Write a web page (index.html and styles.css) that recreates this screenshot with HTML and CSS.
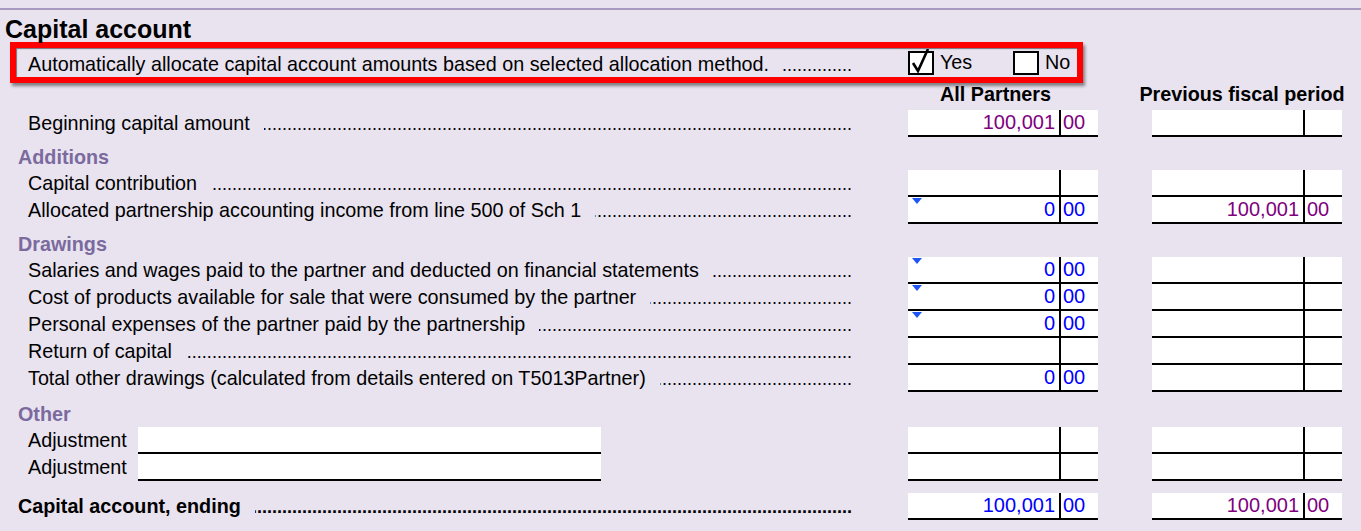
FILE: index.html
```html
<!DOCTYPE html>
<html lang="en">
<head>
    <meta charset="UTF-8">
    <meta name="viewport" content="width=device-width, initial-scale=1.0">
    <title>Capital account</title>
    <link rel="stylesheet" href="styles.css">
</head>
<body>
    <div class="topline"></div>
    <h1>Capital account</h1>

    <div class="auto-box">
        <div class="auto-inner">
            <div class="label">
                <span>Automatically allocate capital account amounts based on selected allocation method.</span>
                <span class="dots">................................................................................</span>
            </div>
            <div class="choices">
                <div class="choice yes">
                    <span class="checkbox">
                        <svg width="26" height="26" viewBox="0 0 26 26">
                            <polyline points="5,14 10,22 20,0" fill="none" stroke="#000" stroke-width="2.6" stroke-linejoin="miter"/>
                        </svg>
                    </span>
                    <span>Yes</span>
                </div>
                <div class="choice">
                    <span class="checkbox"></span>
                    <span>No</span>
                </div>
            </div>
        </div>
    </div>

    <div class="row heads">
        <div></div>
        <div class="head first">All Partners</div>
        <div class="head second">Previous fiscal period</div>
    </div>

    <div class="row">
        <div class="label"><span>Beginning capital amount</span><span class="dots">................................................................................................................................................................................</span></div>
        <div class="field purple"><span class="amt">100,001</span><span class="cents">00</span></div>
        <div class="field"><span class="amt"></span><span class="cents"></span></div>
    </div>

    <div class="section">Additions</div>
    <div class="row">
        <div class="label"><span>Capital contribution</span><span class="dots">................................................................................................................................................................................</span></div>
        <div class="field"><span class="amt"></span><span class="cents"></span></div>
        <div class="field"><span class="amt"></span><span class="cents"></span></div>
    </div>
    <div class="row">
        <div class="label"><span>Allocated partnership accounting income from line 500 of Sch 1</span><span class="dots">................................................................................................................................................................................</span></div>
        <div class="field blue flag"><span class="amt">0</span><span class="cents">00</span></div>
        <div class="field purple"><span class="amt">100,001</span><span class="cents">00</span></div>
    </div>

    <div class="section">Drawings</div>
    <div class="row">
        <div class="label"><span>Salaries and wages paid to the partner and deducted on financial statements</span><span class="dots">................................................................................................................................................................................</span></div>
        <div class="field blue flag"><span class="amt">0</span><span class="cents">00</span></div>
        <div class="field"><span class="amt"></span><span class="cents"></span></div>
    </div>
    <div class="row">
        <div class="label"><span>Cost of products available for sale that were consumed by the partner</span><span class="dots">................................................................................................................................................................................</span></div>
        <div class="field blue flag"><span class="amt">0</span><span class="cents">00</span></div>
        <div class="field"><span class="amt"></span><span class="cents"></span></div>
    </div>
    <div class="row">
        <div class="label"><span>Personal expenses of the partner paid by the partnership</span><span class="dots">................................................................................................................................................................................</span></div>
        <div class="field blue flag"><span class="amt">0</span><span class="cents">00</span></div>
        <div class="field"><span class="amt"></span><span class="cents"></span></div>
    </div>
    <div class="row">
        <div class="label"><span>Return of capital</span><span class="dots">................................................................................................................................................................................</span></div>
        <div class="field"><span class="amt"></span><span class="cents"></span></div>
        <div class="field"><span class="amt"></span><span class="cents"></span></div>
    </div>
    <div class="row">
        <div class="label"><span>Total other drawings (calculated from details entered on T5013Partner)</span><span class="dots">................................................................................................................................................................................</span></div>
        <div class="field blue"><span class="amt">0</span><span class="cents">00</span></div>
        <div class="field"><span class="amt"></span><span class="cents"></span></div>
    </div>

    <div class="section other">Other</div>
    <div class="row">
        <div class="label adj"><span>Adjustment</span><span class="textbox"></span></div>
        <div class="field"><span class="amt"></span><span class="cents"></span></div>
        <div class="field"><span class="amt"></span><span class="cents"></span></div>
    </div>
    <div class="row">
        <div class="label adj"><span>Adjustment</span><span class="textbox"></span></div>
        <div class="field"><span class="amt"></span><span class="cents"></span></div>
        <div class="field"><span class="amt"></span><span class="cents"></span></div>
    </div>

    <div class="row ending">
        <div class="label total"><span>Capital account, ending</span><span class="dots">................................................................................................................................................................................</span></div>
        <div class="field blue double"><span class="amt">100,001</span><span class="cents">00</span></div>
        <div class="field purple"><span class="amt">100,001</span><span class="cents">00</span></div>
    </div>
</body>
</html>
```

FILE: styles.css
```css
html {
    background-color: #e8e3ef;
}
body {
    font-family: 'Liberation Sans', Arial, sans-serif;
    font-size: 19.75px;
    color: #000;
    background-color: #e8e3ef;
    margin: 0;
    padding: 0;
}
.topline {
    height: 2px;
    margin-top: 8px;
    background-color: #a99bbf;
}
h1 {
    margin: 5px 0 0 5px;
    font-size: 25px;
    line-height: 28px;
    font-weight: bold;
}
.auto-box {
    box-sizing: border-box;
    width: 1073px;
    height: 41px;
    margin: -1px 0 0 10px;
    border: 6px solid #ff0000;
    box-shadow: 2px 3px 3px rgba(0, 0, 0, 0.45);
}
.auto-inner {
    display: flex;
    align-items: center;
    height: 100%;
    box-shadow: inset 1px 1px 1px rgba(0, 0, 0, 0.5);
}
.auto-inner .label {
    width: 836px;
    box-sizing: border-box;
    padding: 3px 0 0 12px;
    line-height: 26px;
}
.choices {
    display: flex;
    margin-left: 56px;
}
.choice {
    display: flex;
    align-items: center;
    gap: 6px;
}
.choice.yes {
    width: 105px;
}
.checkbox {
    box-sizing: border-box;
    width: 26px;
    height: 24px;
    border: 2px solid #000;
    background: #fff;
    position: relative;
}
.checkbox svg {
    position: absolute;
    left: -2px;
    top: -4px;
}
.row {
    display: grid;
    grid-template-columns: 908px 190px 54px 190px;
    height: 27px;
}
.row > :nth-child(3) {
    grid-column: 4;
}
.head {
    display: flex;
    justify-content: center;
    white-space: nowrap;
    font-weight: bold;
    line-height: 22px;
}
.head.first {
    padding-right: 15px;
}
.head.second {
    padding-right: 10px;
}
.label {
    display: flex;
    align-items: baseline;
    box-sizing: border-box;
    padding: 0 56px 0 28px;
    line-height: 27px;
    white-space: nowrap;
    overflow: hidden;
}
.dots {
    flex: 1;
    overflow: hidden;
    direction: rtl;
    margin-left: 14px;
    font-size: 18px;
}
.label.adj {
    align-items: stretch;
}
.textbox {
    width: 463px;
    flex: none;
    box-sizing: border-box;
    margin-left: 11px;
    background: #fff;
    border-bottom: 2px solid #000;
}
.label.total {
    padding-left: 18px;
    font-weight: bold;
}
.section {
    padding: 8px 0 0 18px;
    line-height: 25px;
    font-weight: bold;
    color: #7b6a9e;
}
.section.other {
    padding-top: 10px;
}
.field {
    display: flex;
    position: relative;
    height: 25px;
    background: #fff;
    border-bottom: 2px solid #000;
    font-size: 20px;
    line-height: 25px;
}
.field .amt {
    flex: 1;
    text-align: right;
    padding-right: 4px;
}
.field .cents {
    width: 35px;
    padding-left: 2px;
    border-left: 2px solid #000;
}
.blue {
    color: #0000ff;
}
.purple {
    color: #800080;
}
.flag::before {
    content: '';
    position: absolute;
    left: 4px;
    top: 1px;
    border-left: 5px solid transparent;
    border-right: 5px solid transparent;
    border-top: 6px solid #1d56f5;
}
.row.ending {
    margin-top: 12px;
}
.double {
    border-bottom: 5px double #000;
}
```
